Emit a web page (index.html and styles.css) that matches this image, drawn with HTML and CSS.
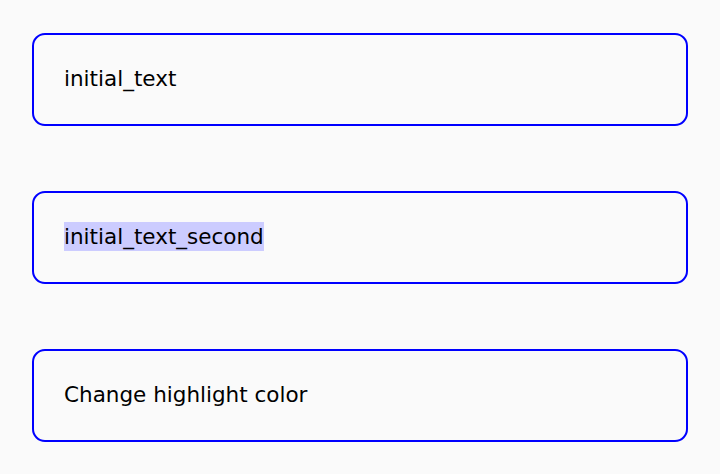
FILE: index.html
```html
<!DOCTYPE html>
<html>
<head>
<meta charset="utf-8">
<link rel="stylesheet" href="styles.css">
</head>
<body>
<div class="list">
  <div class="field"><span class="text">initial_text</span></div>
  <div class="field"><span class="text selected">initial_text_second</span></div>
  <div class="field"><span class="text">Change highlight color</span></div>
</div>
</body>
</html>
```

FILE: styles.css
```css
html, body {
  margin: 0;
  background: #fafafa;
}
body {
  padding: 33px 32px 0 32px;
  font-family: "DejaVu Sans", sans-serif;
  font-size: 21.5px;
  color: #000;
}
.list {
  display: flex;
  flex-direction: column;
  gap: 65px;
}
.field {
  box-sizing: border-box;
  height: 93px;
  border: 2px solid #0000ff;
  border-radius: 13px;
  padding: 0 30px 2px 30px;
  display: flex;
  align-items: center;
}
.text {
  line-height: 29px;
}
.selected {
  background: #ccccff;
}
```
